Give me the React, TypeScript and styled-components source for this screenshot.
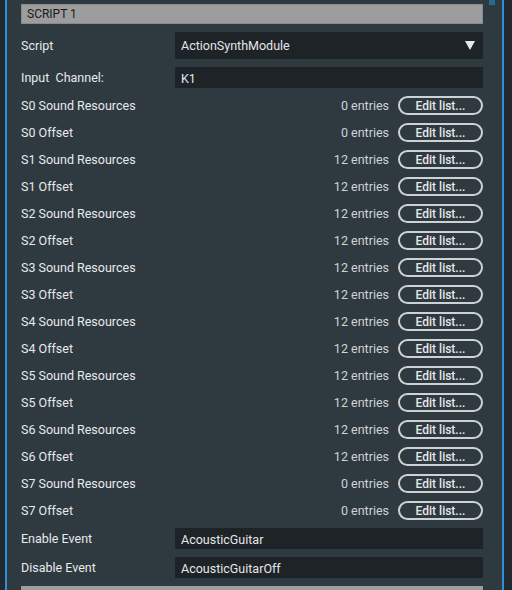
import React from "react";
import styled, { createGlobalStyle } from "styled-components";

const Global = createGlobalStyle`
  html, body { margin: 0; padding: 0; background: #222a30; }
  body { font-family: Roboto, "Noto Sans", sans-serif; }
  #root { width: 512px; height: 590px; overflow: hidden; }
`;

const Frame = styled.div`
  display: flex;
  width: 512px;
  height: 590px;
  overflow: hidden;
`;

const Strip = styled.div<{ $w: number }>`
  width: ${(p) => p.$w}px;
  flex: none;
  background: #222a30;
`;

const BlueLine = styled.div`
  width: 2px;
  flex: none;
  background: #2e90d6;
`;

const Panel = styled.div`
  position: relative;
  flex: 1;
  background: #2e3940;
  padding: 4px 19px 0 14px;
  display: flex;
  flex-direction: column;
  overflow: hidden;
  & > * { flex-shrink: 0; }
`;

const ScrollThumb = styled.div`
  position: absolute;
  right: 7px;
  top: 0;
  width: 6px;
  height: 5px;
  background: #2c6894;
`;

const Header = styled.div`
  height: 20px;
  box-sizing: border-box;
  background: #9d9d9d;
  border: 1px solid #8a8a8a;
  color: #161a1c;
  font-size: 12px;
  display: flex;
  align-items: center;
  padding-left: 5px;
  margin-bottom: 8px;
`;

const FieldRow = styled.div<{ $h: number; $mb: number }>`
  display: flex;
  align-items: center;
  height: ${(p) => p.$h}px;
  margin-bottom: ${(p) => p.$mb}px;
`;

const Label = styled.div`
  width: 154px;
  flex: none;
  color: #e8eaeb;
  font-size: 12.5px;
  white-space: pre;
`;

const Box = styled.div<{ $h: number }>`
  flex: 1;
  height: ${(p) => p.$h}px;
  background: #1d2327;
  color: #e4e6e7;
  font-size: 12.5px;
  display: flex;
  align-items: center;
  padding: 0 8px 0 6px;
  box-sizing: border-box;
  justify-content: space-between;
`;

const BoxText = styled.span<{ $dy?: number }>`
  position: relative;
  top: ${(p) => p.$dy ?? 0}px;
`;

const Arrow = styled.div`
  width: 0;
  height: 0;
  border-left: 5px solid transparent;
  border-right: 5px solid transparent;
  border-top: 9px solid #e6e8e9;
`;

const ListRow = styled.div`
  display: flex;
  align-items: center;
  height: 27px;
`;

const ListLabel = styled.div`
  flex: 1;
  color: #e8eaeb;
  font-size: 12.5px;
`;

const Count = styled.div`
  color: #d0d4d6;
  font-size: 12.5px;
  margin-right: 9px;
`;

const EditButton = styled.div`
  width: 85px;
  height: 19px;
  box-sizing: border-box;
  border: 2px solid #cfd2d3;
  border-radius: 10px;
  color: #e6e8e9;
  font-size: 12px;
  font-weight: 500;
  display: flex;
  align-items: center;
  justify-content: center;
`;

const EventRow = styled.div`
  display: flex;
  align-items: center;
  height: 29px;
`;

const BottomBar = styled.div`
  margin-top: 4px;
  height: 10px;
  background: #9d9d9d;
`;

const rows: [string, number][] = [
  ["S0 Sound Resources", 0],
  ["S0 Offset", 0],
  ["S1 Sound Resources", 12],
  ["S1 Offset", 12],
  ["S2 Sound Resources", 12],
  ["S2 Offset", 12],
  ["S3 Sound Resources", 12],
  ["S3 Offset", 12],
  ["S4 Sound Resources", 12],
  ["S4 Offset", 12],
  ["S5 Sound Resources", 12],
  ["S5 Offset", 12],
  ["S6 Sound Resources", 12],
  ["S6 Offset", 12],
  ["S7 Sound Resources", 0],
  ["S7 Offset", 0],
];

export default function App() {
  return (
    <>
      <Global />
      <Frame>
        <Strip $w={5} />
        <BlueLine />
        <Panel>
          <ScrollThumb />
          <Header>SCRIPT 1</Header>
          <FieldRow $h={27} $mb={8}>
            <Label>Script</Label>
            <Box $h={27}>
              <BoxText>ActionSynthModule</BoxText>
              <Arrow />
            </Box>
          </FieldRow>
          <FieldRow $h={21} $mb={4}>
            <Label>{"Input  Channel:"}</Label>
            <Box $h={21}>
              <BoxText $dy={1}>K1</BoxText>
            </Box>
          </FieldRow>
          {rows.map(([name, n]) => (
            <ListRow key={name}>
              <ListLabel>{name}</ListLabel>
              <Count>{n} entries</Count>
              <EditButton>Edit list...</EditButton>
            </ListRow>
          ))}
          <EventRow>
            <Label>Enable Event</Label>
            <Box $h={21}>
              <BoxText $dy={1}>AcousticGuitar</BoxText>
            </Box>
          </EventRow>
          <EventRow>
            <Label>Disable Event</Label>
            <Box $h={21}>
              <BoxText $dy={1}>AcousticGuitarOff</BoxText>
            </Box>
          </EventRow>
          <BottomBar />
        </Panel>
        <BlueLine />
        <Strip $w={8} />
      </Frame>
    </>
  );
}
